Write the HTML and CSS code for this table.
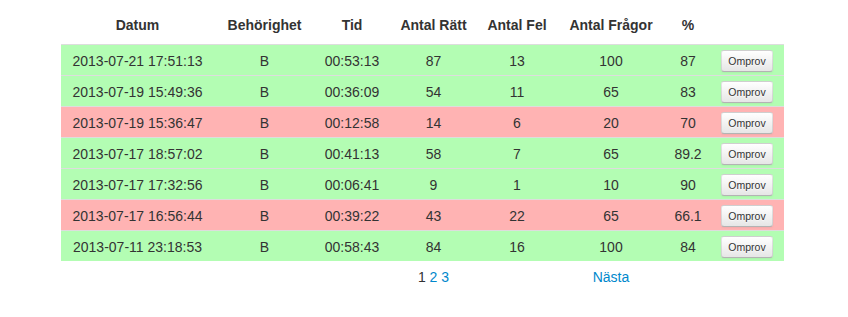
FILE: index.html
```html
<!DOCTYPE html>
<html lang="sv">
<head>
<meta charset="utf-8">
<title>Resultat</title>
<link rel="stylesheet" href="styles.css">
</head>
<body>
<div class="page">
  <table class="results">
    <colgroup>
      <col class="c-date"><col class="c-beh"><col class="c-tid"><col class="c-ratt"><col class="c-fel"><col class="c-fragor"><col class="c-pct"><col class="c-btn">
    </colgroup>
    <thead>
      <tr><th>Datum</th><th>Behörighet</th><th>Tid</th><th>Antal Rätt</th><th>Antal Fel</th><th>Antal Frågor</th><th>%</th><th></th></tr>
    </thead>
    <tbody>
      <tr class="pass"><td>2013-07-21 17:51:13</td><td>B</td><td>00:53:13</td><td>87</td><td>13</td><td>100</td><td>87</td><td><button class="btn">Omprov</button></td></tr>
      <tr class="pass"><td>2013-07-19 15:49:36</td><td>B</td><td>00:36:09</td><td>54</td><td>11</td><td>65</td><td>83</td><td><button class="btn">Omprov</button></td></tr>
      <tr class="fail"><td>2013-07-19 15:36:47</td><td>B</td><td>00:12:58</td><td>14</td><td>6</td><td>20</td><td>70</td><td><button class="btn">Omprov</button></td></tr>
      <tr class="pass"><td>2013-07-17 18:57:02</td><td>B</td><td>00:41:13</td><td>58</td><td>7</td><td>65</td><td>89.2</td><td><button class="btn">Omprov</button></td></tr>
      <tr class="pass"><td>2013-07-17 17:32:56</td><td>B</td><td>00:06:41</td><td>9</td><td>1</td><td>10</td><td>90</td><td><button class="btn">Omprov</button></td></tr>
      <tr class="fail"><td>2013-07-17 16:56:44</td><td>B</td><td>00:39:22</td><td>43</td><td>22</td><td>65</td><td>66.1</td><td><button class="btn">Omprov</button></td></tr>
      <tr class="pass"><td>2013-07-11 23:18:53</td><td>B</td><td>00:58:43</td><td>84</td><td>16</td><td>100</td><td>84</td><td><button class="btn">Omprov</button></td></tr>
    </tbody>
    <tfoot>
      <tr><td></td><td></td><td></td><td><span class="current">1</span> <a href="#">2</a> <a href="#">3</a></td><td></td><td><a href="#">Nästa</a></td><td></td><td></td></tr>
    </tfoot>
  </table>
</div>
</body>
</html>
```
FILE: styles.css
```css
html, body {
  margin: 0;
  padding: 0;
  background: #fff;
}
body {
  font-family: "Liberation Sans", Arial, sans-serif;
  font-size: 14px;
  line-height: 20px;
  color: #333;
}
.page {
  padding: 7px 0 0 61px;
}
.results {
  border-collapse: collapse;
  border-spacing: 0;
  table-layout: fixed;
  width: 723px;
}
.c-date { width: 153px; }
.c-beh { width: 101px; }
.c-tid { width: 74px; }
.c-ratt { width: 89px; }
.c-fel { width: 78px; }
.c-fragor { width: 110px; }
.c-pct { width: 44px; }
.c-btn { width: 74px; }
.results th {
  font-weight: bold;
  text-align: center;
  padding: 8px 0 9px;
  line-height: 20px;
  white-space: nowrap;
}
.results td {
  text-align: center;
  padding: 2px 0 0;
  height: 28px;
  vertical-align: middle;
  white-space: nowrap;
}
.results tbody td {
  border-top: 1px solid #dddddd;
}
.results tbody tr.pass td { background: #b3fdb3; }
.results tbody tr.fail td { background: #ffb3b3; }
.results tfoot td {
  height: 28px;
  padding-top: 2px;
}
.current { color: #333; }
a {
  color: #0088cc;
  text-decoration: none;
}
.btn {
  display: inline-block;
  vertical-align: middle;
  box-sizing: border-box;
  height: 22px;
  padding: 0 6px;
  margin: 0;
  font-family: "Liberation Sans", Arial, sans-serif;
  font-size: 10.5px;
  line-height: 20px;
  color: #333;
  text-shadow: 0 1px 1px rgba(255,255,255,0.75);
  background-color: #f5f5f5;
  background-image: linear-gradient(to bottom, #ffffff, #e6e6e6);
  border: 1px solid #cccccc;
  border-color: rgba(0,0,0,0.1) rgba(0,0,0,0.1) rgba(0,0,0,0.25);
  border-bottom-color: #b3b3b3;
  border-radius: 3px;
  box-shadow: inset 0 1px 0 rgba(255,255,255,0.2), 0 1px 2px rgba(0,0,0,0.05);
  cursor: pointer;
}
```
